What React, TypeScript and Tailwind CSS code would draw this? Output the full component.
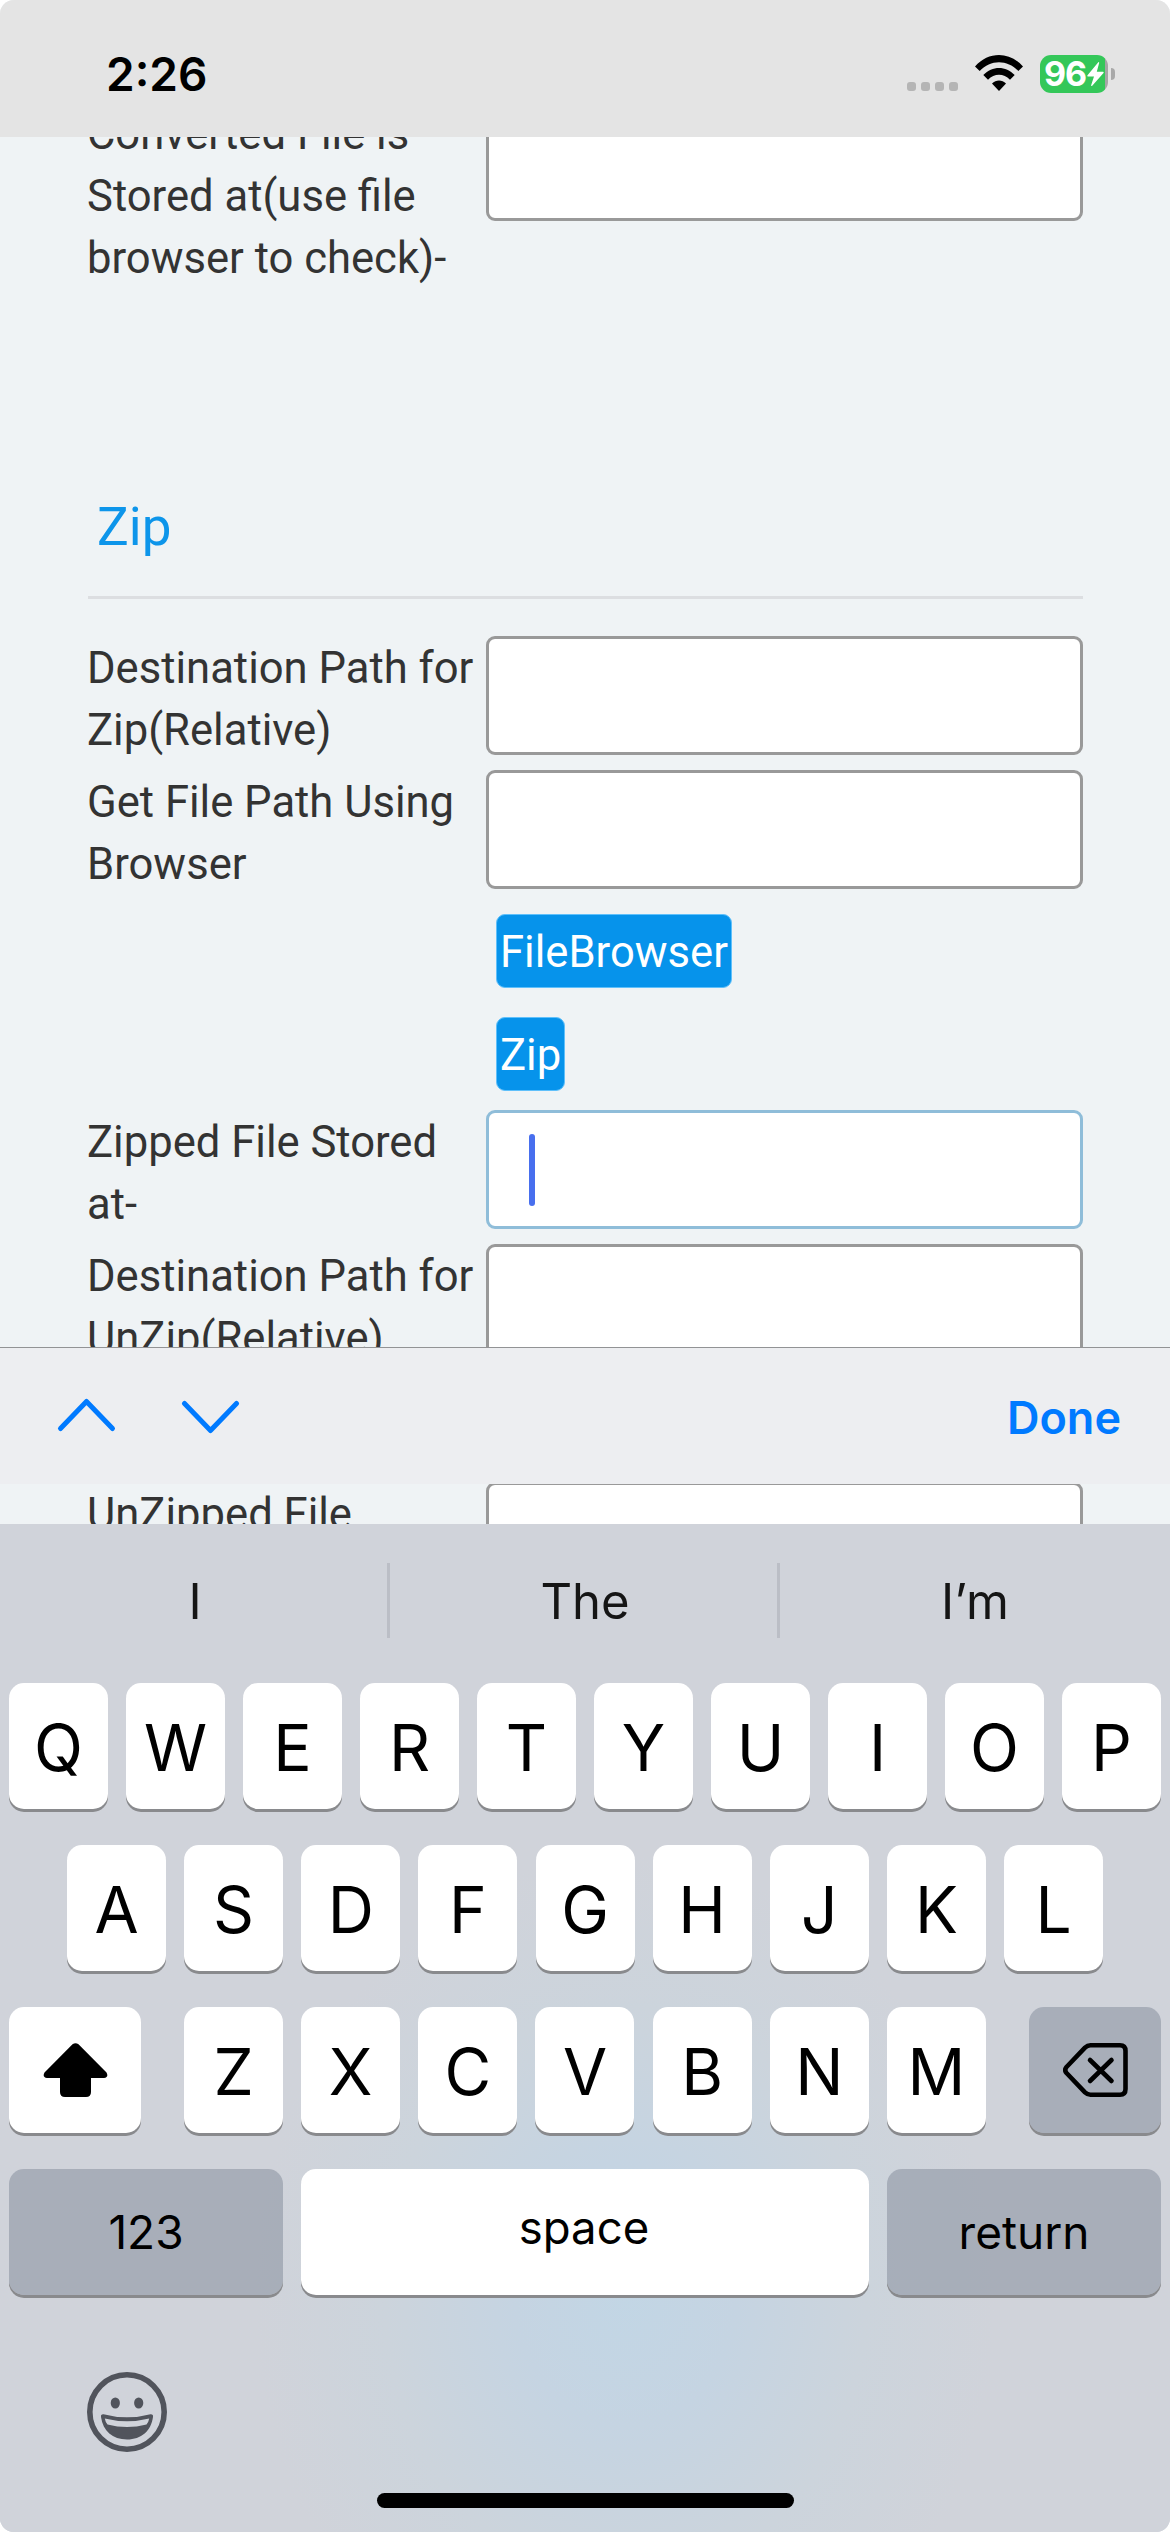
import React from 'react';
import clsx from 'clsx';

type FieldRowProps = {
  lines: string[];
  focused?: boolean;
};

const FieldRow = ({ lines, focused }: FieldRowProps) => (
  <div className="flex h-[134px] shrink-0 items-start">
    <label className="-ml-px w-[399px] shrink-0 pt-[2px] text-[43.6px] leading-[62px] whitespace-nowrap text-[#333]">
      {lines.map((line) => (
        <span key={line} className="block">
          {line}
        </span>
      ))}
    </label>
    <div
      className={clsx(
        'flex h-[119px] w-[597px] items-center rounded-[9px] border-3 bg-white pl-10',
        focused ? 'border-[#8fbdd9]' : 'border-[#999]'
      )}
    >
      {focused && <span className="h-[72px] w-[6px] rounded-full bg-[#486fee]" />}
    </div>
  </div>
);

const ActionButton = ({ label }: { label: string }) => (
  <div className="flex h-[103px] shrink-0 items-start pt-[10px] pl-[408px]">
    <button className="h-[74px] rounded-[9px] border border-[#5fc0fb] bg-[#0693eb] px-[3px] pt-[4px] text-[43.6px] leading-[66px] text-white">
      {label}
    </button>
  </div>
);

type KeyProps = {
  children: React.ReactNode;
  className?: string;
  dark?: boolean;
};

const Key = ({ children, className = 'w-[99px] pt-1 text-[64px]', dark }: KeyProps) => (
  <button
    className={clsx(
      'flex h-[126px] shrink-0 items-center justify-center rounded-[15px] leading-none text-black shadow-[0_3px_0_#898a8d]',
      dark ? 'bg-[#9299a8]/65' : 'bg-white',
      className
    )}
  >
    {children}
  </button>
);

const StatusBar = () => (
  <header className="flex h-[137px] shrink-0 items-start justify-between bg-[#e4e4e4] pr-[55px] pl-[106px]">
    <span className="pt-[50px] text-[46px] leading-[48px] font-semibold text-black">2:26</span>
    <div className="flex items-start pt-[55px]">
      <div className="mt-[27px] flex gap-[5px]">
        {[0, 1, 2, 3].map((dot) => (
          <span key={dot} className="size-[9px] rounded-[3px] bg-[#b5b5b5]" />
        ))}
      </div>
      <svg className="ml-[17px] h-[36px] w-[48px]" viewBox="0 0 48 36">
        <path d="M0 11.5C13.5-3.8 34.5-3.8 48 11.5L43.3 16C32.5 4.2 15.500 4.200 4.700 16Z" />
        <path d="M8.300 20C17.300 10.500 30.700 10.500 39.700 20L35 24.700C28.700 18.200 19.300 18.200 13 24.700Z" />
        <path d="M17 28.600C21 24.500 27 24.500 31 28.600L24 36Z" />
      </svg>
      <div className="ml-[17px] flex h-[38px] w-[68px] items-center rounded-[11px] bg-[linear-gradient(90deg,#34c759_65px,#a5a5a5_65px)] pl-[4px]">
        <span className="w-[43px] text-[34px] leading-[38px] font-bold tracking-[-1px] text-white">96</span>
        <svg className="h-[24px] w-[17px] shrink-0" viewBox="0 0 17 24">
          <path fill="#fff" d="M11.500 0Q12.500 0 12 1.500L9.800 9.700H16Q17 10 16.500 11L5 24Q4 24.500 4.200 23L7 14.500H0.800Q0 14 0.500 13.200Z" />
        </svg>
      </div>
      <span className="mt-[13px] ml-[3px] h-[12px] w-[4px] rounded-r-full bg-[#a9a9a9]" />
    </div>
  </header>
);

const AccessoryBar = () => (
  <div className="absolute inset-x-0 top-[1210px] flex h-[137px] items-center justify-between border-t border-[#929395] bg-[#edeef1] pr-[49px] pl-[56px]">
    <svg
      className="h-[40px] w-[184px]"
      viewBox="0 0 184 40"
      fill="none"
      stroke="#007aff"
      strokeWidth="5"
      strokeLinecap="round"
      strokeLinejoin="round"
    >
      <path d="M4.500 32.500L30.500 5.500L56.500 32.500" />
      <path d="M128.500 7.500L154.500 34.500L180.500 7.500" />
    </svg>
    <span className="pt-[2px] font-['Inter',sans-serif] text-[45px] leading-none font-semibold text-[#007aff]">
      Done
    </span>
  </div>
);

const Suggestions = () => (
  <div className="flex h-[159px] shrink-0 items-start pt-[39px] text-[49px] text-[#151515]">
    <span className="h-[75px] w-[390px] border-r-3 border-[#bbbec6] pl-[3px] text-center leading-[77px]">I</span>
    <span className="h-[75px] w-[390px] border-r-3 border-[#bbbec6] pl-[3px] text-center leading-[77px]">The</span>
    <span className="h-[75px] w-[390px] text-center leading-[77px]">I’m</span>
  </div>
);

const Keyboard = () => (
  <section className="flex h-[1008px] shrink-0 flex-col bg-[#d0d3da] bg-[radial-gradient(ellipse_370px_440px_at_625px_770px,#c2d6e5_0%,#c5d4e2_30%,#ccd4dc_65%,#d0d3da_100%)]">
    <Suggestions />
    <div className="flex flex-col gap-[36px]">
      <div className="flex justify-between px-[9px]">
        {'QWERTYUIOP'.split('').map((letter) => (
          <Key key={letter}>{letter}</Key>
        ))}
      </div>
      <div className="flex justify-between px-[67px]">
        {'ASDFGHJKL'.split('').map((letter) => (
          <Key key={letter}>{letter}</Key>
        ))}
      </div>
      <div className="flex justify-between px-[9px]">
        <Key className="w-[132px]">
          <svg className="h-[54px] w-[65px]" viewBox="0 0 65 54">
            <path d="M29.500 1.300Q32.500-1 35.500 1.300L63.500 29.500Q66 34.500 61 35H48V49Q48 54 43 54H22Q17 54 17 49V35H4Q-1 34.500 1.500 29.500Z" />
          </svg>
        </Key>
        <div className="flex w-[802px] justify-between">
          {'ZXCVBNM'.split('').map((letter) => (
            <Key key={letter}>{letter}</Key>
          ))}
        </div>
        <Key dark className="w-[132px]">
          <svg
            className="h-[54px] w-[65px]"
            viewBox="0 0 65 54"
            fill="none"
            stroke="#000"
            strokeWidth="4.600"
            strokeLinecap="round"
            strokeLinejoin="round"
          >
            <path d="M27.500 2.300H57Q62.500 2.300 62.500 8V46Q62.500 51.700 57 51.700H27.500Q24.500 51.700 22 49.300L3.500 30Q1 27 3.500 24L22 4.700Q24.500 2.300 27.500 2.300Z" />
            <path d="M27 17L48.500 38M48.500 17L27 38" />
          </svg>
        </Key>
      </div>
      <div className="flex gap-[18px] px-[9px]">
        <Key dark className="w-[274px] text-[46px]">
          123
        </Key>
        <Key className="w-[568px] pr-[2px] pb-[9px] text-[45.5px]">space</Key>
        <Key dark className="w-[274px] text-[46px]">
          return
        </Key>
      </div>
    </div>
    <svg className="mt-[77px] ml-[87px] h-[80px] w-[80px] shrink-0" viewBox="0 0 80 80" fill="#51545c">
      <circle cx="40" cy="40" r="37.200" fill="none" stroke="#51545c" strokeWidth="5.600" />
      <ellipse cx="28.300" cy="31" rx="4.600" ry="5.500" />
      <ellipse cx="51.700" cy="31" rx="4.600" ry="5.500" />
      <path
        fillRule="evenodd"
        d="M16.500 42.200Q40 48.500 63.500 42.200Q66.500 42 66 45C64 59 54.500 67.500 40 67.500S16 59 14 45Q13.500 42 16.500 42.200ZM17.800 46.500Q18.500 50.500 20.500 52.500Q40 57.500 59.500 52.500Q61.500 50.500 62.200 46.500Q40 52 17.800 46.500Z"
      />
    </svg>
    <div className="mx-auto mt-[41px] h-[15px] w-[417px] shrink-0 rounded-full bg-black" />
  </section>
);

const App = () => {
  return (
    <div className="bg-white">
      <div className="flex h-[2532px] w-[1170px] flex-col overflow-hidden rounded-[14px] bg-[#eff3f5] font-['Inter',sans-serif]">
        <StatusBar />
        <main className="relative h-[1387px] shrink-0 overflow-hidden font-['Roboto',sans-serif]">
          <div className="-mt-[35px] flex flex-col pl-[88px]">
            <FieldRow lines={['Converted File is', 'Stored at(use file', 'browser to check)-']} />
            <h2 className="mt-[260px] shrink-0 pl-[9px] text-[53px] leading-[62px] text-[#0d95ea]">Zip</h2>
            <hr className="mt-[38px] mb-[37px] w-[995px] border-t-3 border-[#dcdee1]" />
            <FieldRow lines={['Destination Path for', 'Zip(Relative)']} />
            <FieldRow lines={['Get File Path Using', 'Browser']} />
            <ActionButton label="FileBrowser" />
            <ActionButton label="Zip" />
            <FieldRow lines={['Zipped File Stored', 'at-']} focused />
            <FieldRow lines={['Destination Path for', 'UnZip(Relative)']} />
            <div className="h-[104px] shrink-0" />
            <FieldRow lines={['UnZipped File']} />
          </div>
          <AccessoryBar />
        </main>
        <Keyboard />
      </div>
    </div>
  );
};

export default App;
